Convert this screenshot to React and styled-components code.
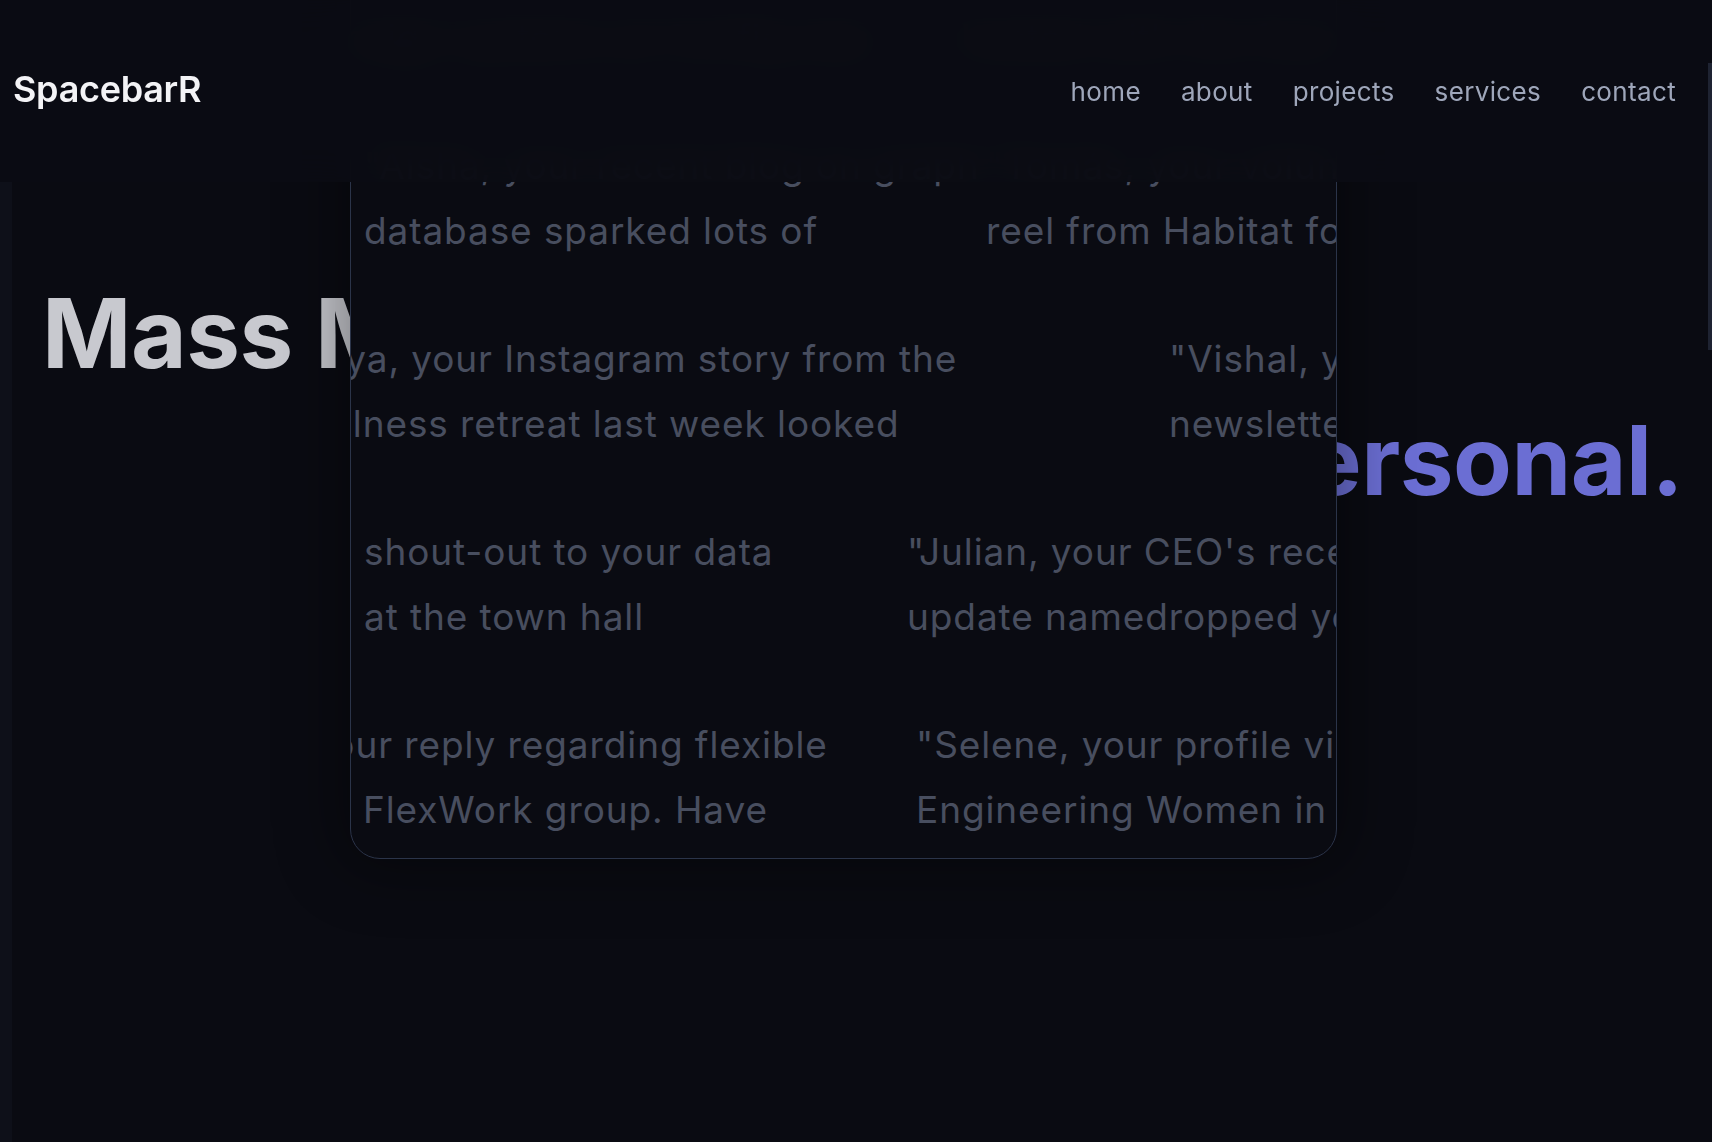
import React from 'react';
import styled, { createGlobalStyle } from 'styled-components';

const GlobalStyle = createGlobalStyle`
  html, body {
    margin: 0;
    padding: 0;
    background: #0e1019;
  }
  body {
    font-family: "Inter", "DejaVu Sans", sans-serif;
    -webkit-font-smoothing: antialiased;
  }
  ::-webkit-scrollbar {
    width: 0;
  }
`;

const Header = styled.header`
  position: fixed;
  top: 0;
  left: 0;
  right: 0;
  height: 182px;
  z-index: 10;
  display: flex;
  align-items: center;
  justify-content: space-between;
  padding: 0 36px 0 13px;
  background: rgba(11, 12, 19, 0.94);
  backdrop-filter: blur(18px);
  -webkit-backdrop-filter: blur(18px);
`;

const Logo = styled.div`
  margin-bottom: 4px;
  font-size: 36px;
  font-weight: 600;
  color: #f3f3f6;
  letter-spacing: -0.3px;
`;

const Nav = styled.nav`
  display: flex;
  gap: 40px;
`;

const NavLink = styled.a`
  font-size: 26px;
  font-weight: 400;
  letter-spacing: 0.35px;
  color: #9ea6ba;
  text-decoration: none;
`;

const ScrollThumb = styled.div`
  position: fixed;
  top: 63px;
  right: 0;
  width: 4px;
  height: 287px;
  background: #1e2332;
  z-index: 11;
`;

const Main = styled.main`
  position: relative;
  margin-left: 12px;
  min-height: 4300px;
  background: #0a0b12;
`;

const Hero = styled.section`
  position: relative;
  padding: 270px 29px 0 30px;
`;

const Title = styled.h1`
  margin: 0;
  display: flex;
  flex-direction: column;
  font-size: 96px;
  line-height: 127px;
  font-weight: 700;
  letter-spacing: -0.5px;
  color: #c8c9cf;
`;

const TitleLine = styled.span`
  align-self: ${(p) => (p.$right ? 'flex-end' : 'flex-start')};
`;

const Accent = styled.span`
  color: #6b6ed3;
`;

const Card = styled.div`
  position: absolute;
  top: -80px;
  left: 338px;
  width: 987px;
  height: 939px;
  box-sizing: border-box;
  border: 1.5px solid #2b3449;
  border-radius: 30px;
  background: #0a0b12;
  overflow: hidden;
  box-shadow: 0 0 60px 14px rgba(0, 0, 0, 0.35);
  z-index: 2;
`;

const Rows = styled.div`
  display: flex;
  flex-direction: column;
  gap: 64px;
  padding-top: 20px;
`;

const Row = styled.div`
  display: flex;
  transform: translateX(${(p) => p.$shift}px);
`;

const Message = styled.div`
  flex-shrink: 0;
  width: ${(p) => p.$width}px;
  display: flex;
  flex-direction: column;
  white-space: nowrap;
  font-size: 37px;
  line-height: 64.5px;
  letter-spacing: 0.9px;
  font-weight: 400;
  color: #484e5f;
`;

const rows = [
  {
    shift: -30,
    items: [
      { width: 640, lines: ['"Daniel, your keynote on scaling', 'design systems at Config was'] },
      { width: 600, lines: ['"Mei, the podcast episode you', 'hosted with the founders of'] },
    ],
  },
  {
    shift: 13,
    items: [
      { width: 622, lines: ['"Aisha, your recent blog on graph', 'database sparked lots of'] },
      { width: 600, lines: ['"Tomás, your volunteering highlight', 'reel from Habitat for Humanity'] },
    ],
  },
  {
    shift: -61,
    items: [
      { width: 879, lines: ['"Jaya, your Instagram story from the', 'wellness retreat last week looked'] },
      { width: 600, lines: ['"Vishal, your feature in the', 'newsletter this month was'] },
    ],
  },
  {
    shift: 13,
    items: [
      { width: 543, lines: ['shout-out to your data', 'at the town hall'] },
      { width: 600, lines: ['"Julian, your CEO\'s recent', 'update namedropped your team'] },
    ],
  },
  {
    shift: -60,
    items: [
      { width: 625, lines: ['"Your reply regarding flexible', 'our FlexWork group. Have'] },
      { width: 600, lines: ['"Selene, your profile video for', 'Engineering Women in Tech'] },
    ],
  },
];

const App = () => {
  return (
    <>
      <GlobalStyle />
      <Header>
        <Logo>SpacebarR</Logo>
        <Nav>
          <NavLink href="#home">home</NavLink>
          <NavLink href="#about">about</NavLink>
          <NavLink href="#projects">projects</NavLink>
          <NavLink href="#services">services</NavLink>
          <NavLink href="#contact">contact</NavLink>
        </Nav>
      </Header>
      <ScrollThumb />
      <Main>
        <Hero>
          <Title>
            <TitleLine>Mass Messaging.</TitleLine>
            <TitleLine $right>
              Made <Accent>Personal.</Accent>
            </TitleLine>
          </Title>
          <Card>
            <Rows>
              {rows.map((row, i) => (
                <Row key={i} $shift={row.shift}>
                  {row.items.map((item, j) => (
                    <Message key={j} $width={item.width}>
                      {item.lines.map((line, k) => (
                        <span key={k}>{line}</span>
                      ))}
                    </Message>
                  ))}
                </Row>
              ))}
            </Rows>
          </Card>
        </Hero>
      </Main>
    </>
  );
};

export default App;
